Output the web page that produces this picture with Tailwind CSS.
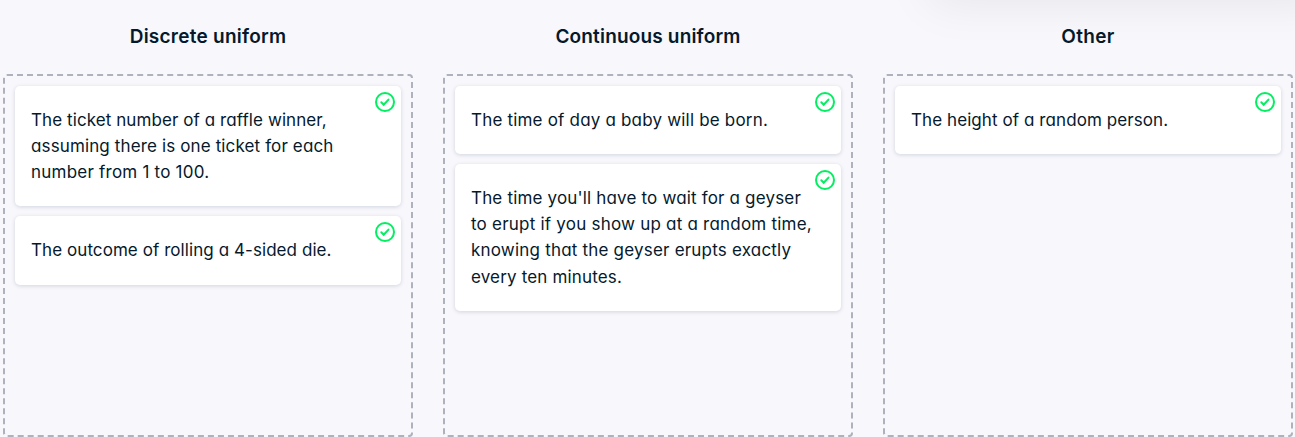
<!DOCTYPE html>
<html lang="en">
<head>
<meta charset="utf-8">
<title>Sort the distributions</title>
<script src="https://cdn.jsdelivr.net/npm/@tailwindcss/browser@4"></script>
</head>
<body class="h-[437px] overflow-hidden bg-[#f7f7fc] font-['Inter','Liberation_Sans',sans-serif] text-[#05192d] [font-feature-settings:'cv11']">
<svg class="hidden"><symbol id="check" viewBox="0 0 20 20"><circle cx="10" cy="10" r="9" fill="none" stroke="#03ef62" stroke-width="2"/><path d="M6.3 10.3 8.7 12.7 13.5 7.6" fill="none" stroke="#03ef62" stroke-width="2" stroke-linecap="round" stroke-linejoin="miter"/></symbol></svg>
<div class="absolute -top-[60px] left-[930px] h-[50px] w-[400px] rounded shadow-[0_12px_48px_0_rgba(5,5,5,0.08)]"></div>
<main class="relative flex h-[437px] w-[1295px] gap-[30px] pl-[3px]">
  <section class="w-[410px] shrink-0">
    <h2 class="h-[74px] pt-[23px] text-center text-[19px] leading-[27px] font-semibold tracking-[0.25px]">Discrete uniform</h2>
    <div class="flex h-[362.5px] flex-col gap-[10px] rounded border-2 border-dashed border-[#adb2bd] p-[10px]">
      <div class="relative rounded-[5px] bg-white px-4 pt-[21px] pb-[21.2px] text-[17px] leading-[26.05px] whitespace-nowrap shadow-[0_1px_4px_rgba(5,25,45,0.15)]">
        <div class="tracking-[0.08px]">The ticket number of a raffle winner,</div>
        <div class="tracking-[0.13px]">assuming there is one ticket for each</div>
        <div class="tracking-[0.22px]">number from 1 to 100.</div>
        <svg class="absolute top-[6px] right-[6px] size-5"><use href="#check"/></svg>
      </div>
      <div class="relative rounded-[5px] bg-white px-4 pt-[21px] pb-[21.2px] text-[17px] leading-[26.05px] whitespace-nowrap shadow-[0_1px_4px_rgba(5,25,45,0.15)]">
        <div class="tracking-[0.07px]">The outcome of rolling a 4-sided die.</div>
        <svg class="absolute top-[6px] right-[6px] size-5"><use href="#check"/></svg>
      </div>
    </div>
  </section>
  <section class="w-[410px] shrink-0">
    <h2 class="h-[74px] pt-[23px] text-center text-[19px] leading-[27px] font-semibold tracking-[0.17px]">Continuous uniform</h2>
    <div class="flex h-[362.5px] flex-col gap-[10px] rounded border-2 border-dashed border-[#adb2bd] p-[10px]">
      <div class="relative rounded-[5px] bg-white px-4 pt-[21px] pb-[21.2px] text-[17px] leading-[26.05px] whitespace-nowrap shadow-[0_1px_4px_rgba(5,25,45,0.15)]">
        <div class="tracking-[0.19px]">The time of day a baby will be born.</div>
        <svg class="absolute top-[6px] right-[6px] size-5"><use href="#check"/></svg>
      </div>
      <div class="relative rounded-[5px] bg-white px-4 pt-[21px] pb-[21.2px] text-[17px] leading-[26.05px] whitespace-nowrap shadow-[0_1px_4px_rgba(5,25,45,0.15)]">
        <div class="tracking-[0.17px]">The time you'll have to wait for a geyser</div>
        <div class="tracking-[0.22px]">to erupt if you show up at a random time,</div>
        <div class="tracking-[0.2px]">knowing that the geyser erupts exactly</div>
        <div class="pt-px -mb-px tracking-[0.16px]">every ten minutes.</div>
        <svg class="absolute top-[6px] right-[6px] size-5"><use href="#check"/></svg>
      </div>
    </div>
  </section>
  <section class="w-[410px] shrink-0">
    <h2 class="h-[74px] pt-[23px] text-center text-[19px] leading-[27px] font-semibold tracking-[0.35px]">Other</h2>
    <div class="flex h-[362.5px] flex-col gap-[10px] rounded border-2 border-dashed border-[#adb2bd] p-[10px]">
      <div class="relative rounded-[5px] bg-white px-4 pt-[21px] pb-[21.2px] text-[17px] leading-[26.05px] whitespace-nowrap shadow-[0_1px_4px_rgba(5,25,45,0.15)]">
        <div class="tracking-[0.08px]">The height of a random person.</div>
        <svg class="absolute top-[6px] right-[6px] size-5"><use href="#check"/></svg>
      </div>
    </div>
  </section>
</main>
</body>
</html>
